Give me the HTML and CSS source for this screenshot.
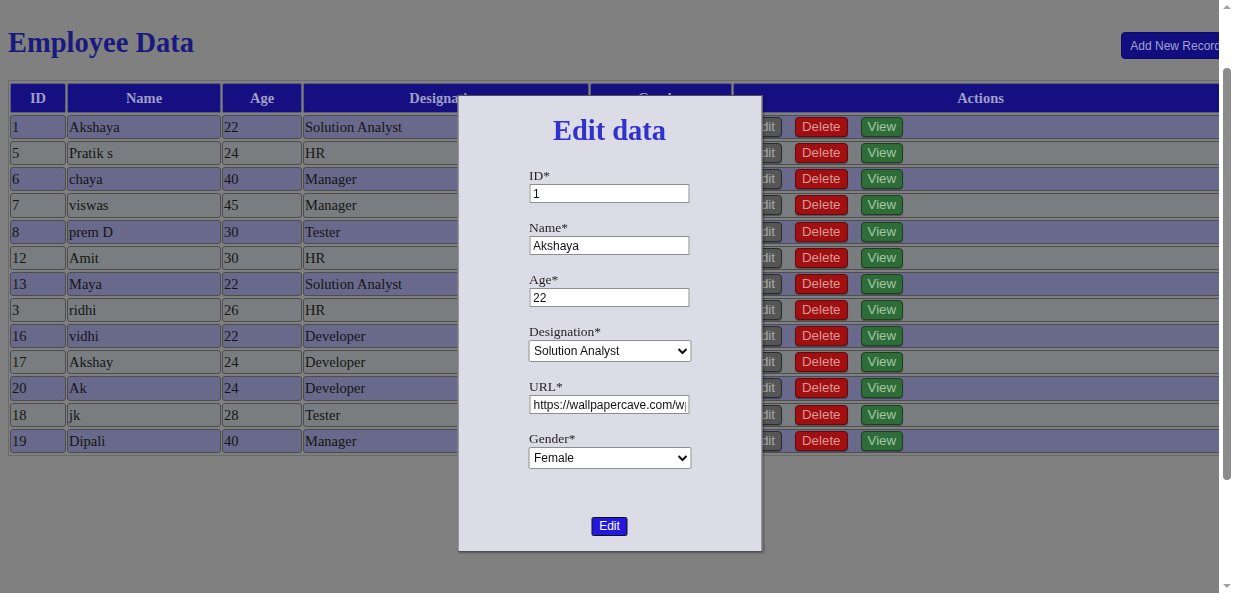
FILE: index.html
```html
<!DOCTYPE html>
<html lang="en">
<head>
<meta charset="utf-8">
<title>Employee Data</title>
<link rel="stylesheet" href="styles.css">
</head>
<body>
<div class="page">
  <div class="topbar">
    <h1 class="title">Employee Data</h1>
    <button class="add-btn">Add New Record</button>
  </div>
  <table class="grid">
    <thead>
      <tr>
        <th class="c-id">ID</th>
        <th class="c-name">Name</th>
        <th class="c-age">Age</th>
        <th class="c-des">Designation</th>
        <th class="c-gen">Gender</th>
        <th class="c-act">Actions</th>
      </tr>
    </thead>
    <tbody>
      <tr><td>1</td><td>Akshaya</td><td>22</td><td>Solution Analyst</td><td>Female</td><td><div class="acts"><button class="b b-edit">Edit</button><button class="b b-del">Delete</button><button class="b b-view">View</button></div></td></tr>
      <tr><td>5</td><td>Pratik s</td><td>24</td><td>HR</td><td>Male</td><td><div class="acts"><button class="b b-edit">Edit</button><button class="b b-del">Delete</button><button class="b b-view">View</button></div></td></tr>
      <tr><td>6</td><td>chaya</td><td>40</td><td>Manager</td><td>Female</td><td><div class="acts"><button class="b b-edit">Edit</button><button class="b b-del">Delete</button><button class="b b-view">View</button></div></td></tr>
      <tr><td>7</td><td>viswas</td><td>45</td><td>Manager</td><td>Male</td><td><div class="acts"><button class="b b-edit">Edit</button><button class="b b-del">Delete</button><button class="b b-view">View</button></div></td></tr>
      <tr><td>8</td><td>prem D</td><td>30</td><td>Tester</td><td>Male</td><td><div class="acts"><button class="b b-edit">Edit</button><button class="b b-del">Delete</button><button class="b b-view">View</button></div></td></tr>
      <tr><td>12</td><td>Amit</td><td>30</td><td>HR</td><td>Male</td><td><div class="acts"><button class="b b-edit">Edit</button><button class="b b-del">Delete</button><button class="b b-view">View</button></div></td></tr>
      <tr><td>13</td><td>Maya</td><td>22</td><td>Solution Analyst</td><td>Female</td><td><div class="acts"><button class="b b-edit">Edit</button><button class="b b-del">Delete</button><button class="b b-view">View</button></div></td></tr>
      <tr><td>3</td><td>ridhi</td><td>26</td><td>HR</td><td>Female</td><td><div class="acts"><button class="b b-edit">Edit</button><button class="b b-del">Delete</button><button class="b b-view">View</button></div></td></tr>
      <tr><td>16</td><td>vidhi</td><td>22</td><td>Developer</td><td>Female</td><td><div class="acts"><button class="b b-edit">Edit</button><button class="b b-del">Delete</button><button class="b b-view">View</button></div></td></tr>
      <tr><td>17</td><td>Akshay</td><td>24</td><td>Developer</td><td>Male</td><td><div class="acts"><button class="b b-edit">Edit</button><button class="b b-del">Delete</button><button class="b b-view">View</button></div></td></tr>
      <tr><td>20</td><td>Ak</td><td>24</td><td>Developer</td><td>Male</td><td><div class="acts"><button class="b b-edit">Edit</button><button class="b b-del">Delete</button><button class="b b-view">View</button></div></td></tr>
      <tr><td>18</td><td>jk</td><td>28</td><td>Tester</td><td>Male</td><td><div class="acts"><button class="b b-edit">Edit</button><button class="b b-del">Delete</button><button class="b b-view">View</button></div></td></tr>
      <tr><td>19</td><td>Dipali</td><td>40</td><td>Manager</td><td>Female</td><td><div class="acts"><button class="b b-edit">Edit</button><button class="b b-del">Delete</button><button class="b b-view">View</button></div></td></tr>
    </tbody>
  </table>
</div>

<div class="modal">
  <h2 class="modal-title">Edit data</h2>
  <form class="form">
    <div class="field">
      <label class="lbl" for="f-id">ID*</label>
      <input class="inp" id="f-id" type="text" value="1">
    </div>
    <div class="field">
      <label class="lbl" for="f-name">Name*</label>
      <input class="inp" id="f-name" type="text" value="Akshaya">
    </div>
    <div class="field">
      <label class="lbl" for="f-age">Age*</label>
      <input class="inp" id="f-age" type="text" value="22">
    </div>
    <div class="field">
      <label class="lbl" for="f-des">Designation*</label>
      <select class="sel" id="f-des">
        <option selected>Solution Analyst</option>
        <option>HR</option>
        <option>Manager</option>
        <option>Tester</option>
        <option>Developer</option>
      </select>
    </div>
    <div class="field">
      <label class="lbl" for="f-url">URL*</label>
      <input class="inp" id="f-url" type="text" value="https://wallpapercave.com/wp/wp2555030.jpg">
    </div>
    <div class="field">
      <label class="lbl" for="f-gen">Gender*</label>
      <select class="sel" id="f-gen">
        <option selected>Female</option>
        <option>Male</option>
      </select>
    </div>
    <div class="submit-row">
      <button type="button" class="save-btn">Edit</button>
    </div>
  </form>
</div>

<div class="scrollbar" aria-hidden="true">
  <span class="sb-up"></span>
  <span class="sb-thumb"></span>
  <span class="sb-down"></span>
</div>
</body>
</html>
```

FILE: styles.css
```css
html {
  overflow: hidden;
  background: #808080;
}
body {
  margin: 0;
  min-height: 812px;
  background: #808080;
  font-family: "Liberation Serif", "Times New Roman", serif;
  color: #151515;
}
.page {
  width: 1222px;
  margin-left: 8px;
  padding-top: 26px;
}
.topbar {
  display: flex;
  justify-content: space-between;
  align-items: flex-start;
}
.title {
  margin: 0;
  font-size: 28.5px;
  line-height: 33px;
  font-weight: bold;
  color: #1a1a7e;
}
.add-btn {
  margin-top: 6px;
  height: 27px;
  padding: 0 8px;
  border: 1px solid #0d0a6a;
  border-radius: 4px;
  background: #130e80;
  color: #a2a2c9;
  font-family: "Liberation Sans", Arial, sans-serif;
  font-size: 12px;
}

.grid {
  margin-top: 21px;
  width: 100%;
  table-layout: fixed;
  border-collapse: separate;
  border-spacing: 1px 2px;
  border: 1px solid #6a6a6a;
  font-size: 14.5px;
}
.c-id { width: 56px; }
.c-name { width: 154px; }
.c-age { width: 80px; }
.c-des { width: 286px; }
.c-gen { width: 142px; }
.c-act { width: auto; }

.grid th {
  height: 30px;
  padding: 0 2px;
  box-sizing: border-box;
  background: #150f82;
  color: #9f9fc6;
  font-weight: bold;
  text-align: center;
  border: 1px solid #5b5b7a;
  border-radius: 2px;
}
.grid td {
  height: 24.15px;
  box-sizing: border-box;
  padding: 0 1px;
  line-height: 20px;
  border: 1px solid #4d4d4d;
  border-radius: 3px;
  white-space: nowrap;
  overflow: hidden;
}
.grid tbody tr:nth-child(odd) td { background: #69698b; }
.grid tbody tr:nth-child(even) td { background: #797d80; }

.acts {
  display: flex;
  gap: 13px;
  padding-left: 10px;
  align-items: center;
}
.b {
  height: 20px;
  padding: 0 6px;
  border: 1px solid #2c2c2c;
  border-radius: 4px;
  font-family: "Liberation Sans", Arial, sans-serif;
  font-size: 13.33px;
  line-height: 18px;
  box-shadow: 0 1px 1px rgba(0,0,0,0.35);
}
.b-edit { background: #565656; color: #a8a8a8; }
.b-del { background: #a10f11; color: #d69a9a; border-color: #5e0c0c; }
.b-view { background: #2e6d37; color: #a4c6a9; border-color: #1d3f22; }

.modal {
  position: fixed;
  top: 95px;
  left: calc((100% - 15px) / 2);
  transform: translateX(-50%);
  width: 305px;
  height: 457px;
  box-sizing: border-box;
  padding-top: 18px;
  background: #dcdce6;
  border: 1px solid #505050;
  box-shadow: 1px 1px 2px rgba(0,0,0,0.35);
  display: flex;
  flex-direction: column;
  align-items: center;
}
.modal-title {
  margin: 0;
  font-size: 28.5px;
  line-height: 33px;
  font-weight: bold;
  color: #3131cd;
}
.form {
  margin-top: 20px;
  width: 163px;
  display: flex;
  flex-direction: column;
}
.field {
  display: flex;
  flex-direction: column;
  align-items: flex-start;
  margin-bottom: 16px;
}
.lbl {
  display: block;
  font-size: 13.5px;
  line-height: 17px;
  color: #2b2424;
  padding-left: 1px;
}
.inp {
  width: 160px;
  height: 19px;
  box-sizing: border-box;
  margin: 0 0 0 1px;
  padding: 1px 3px;
  border: 1px solid #8f8f8f;
  background: #fff;
  font-family: "Liberation Sans", Arial, sans-serif;
  font-size: 12px;
  color: #111;
}
.sel {
  width: 163px;
  height: 22px;
  box-sizing: border-box;
  margin: 0;
  padding: 0 1px;
  border: 1px solid #8f8f8f;
  border-radius: 2px;
  background: #fff;
  font-family: "Liberation Sans", Arial, sans-serif;
  font-size: 12px;
  color: #111;
}
.submit-row {
  display: flex;
  justify-content: center;
  margin-top: 32px;
}
.save-btn {
  height: 19px;
  padding: 0 7px;
  border: 1px solid #111;
  border-radius: 2px;
  background: #2318e0;
  color: #fff;
  font-family: "Liberation Sans", Arial, sans-serif;
  font-size: 12px;
  line-height: 17px;
}

.scrollbar {
  position: fixed;
  top: 0;
  right: 0;
  bottom: 0;
  width: 15px;
  background: #ffffff;
  display: flex;
  flex-direction: column;
  align-items: center;
}
.sb-up {
  margin-top: 5px;
  width: 0;
  height: 0;
  border-left: 4px solid transparent;
  border-right: 4px solid transparent;
  border-bottom: 4px solid #a3a3a3;
}
.sb-thumb {
  margin-top: 59px;
  width: 8px;
  height: 412px;
  border-radius: 4px;
  background: #8b8b8b;
}
.sb-down {
  margin-top: auto;
  margin-bottom: 5px;
  width: 0;
  height: 0;
  border-left: 4px solid transparent;
  border-right: 4px solid transparent;
  border-top: 4px solid #a3a3a3;
}
```
